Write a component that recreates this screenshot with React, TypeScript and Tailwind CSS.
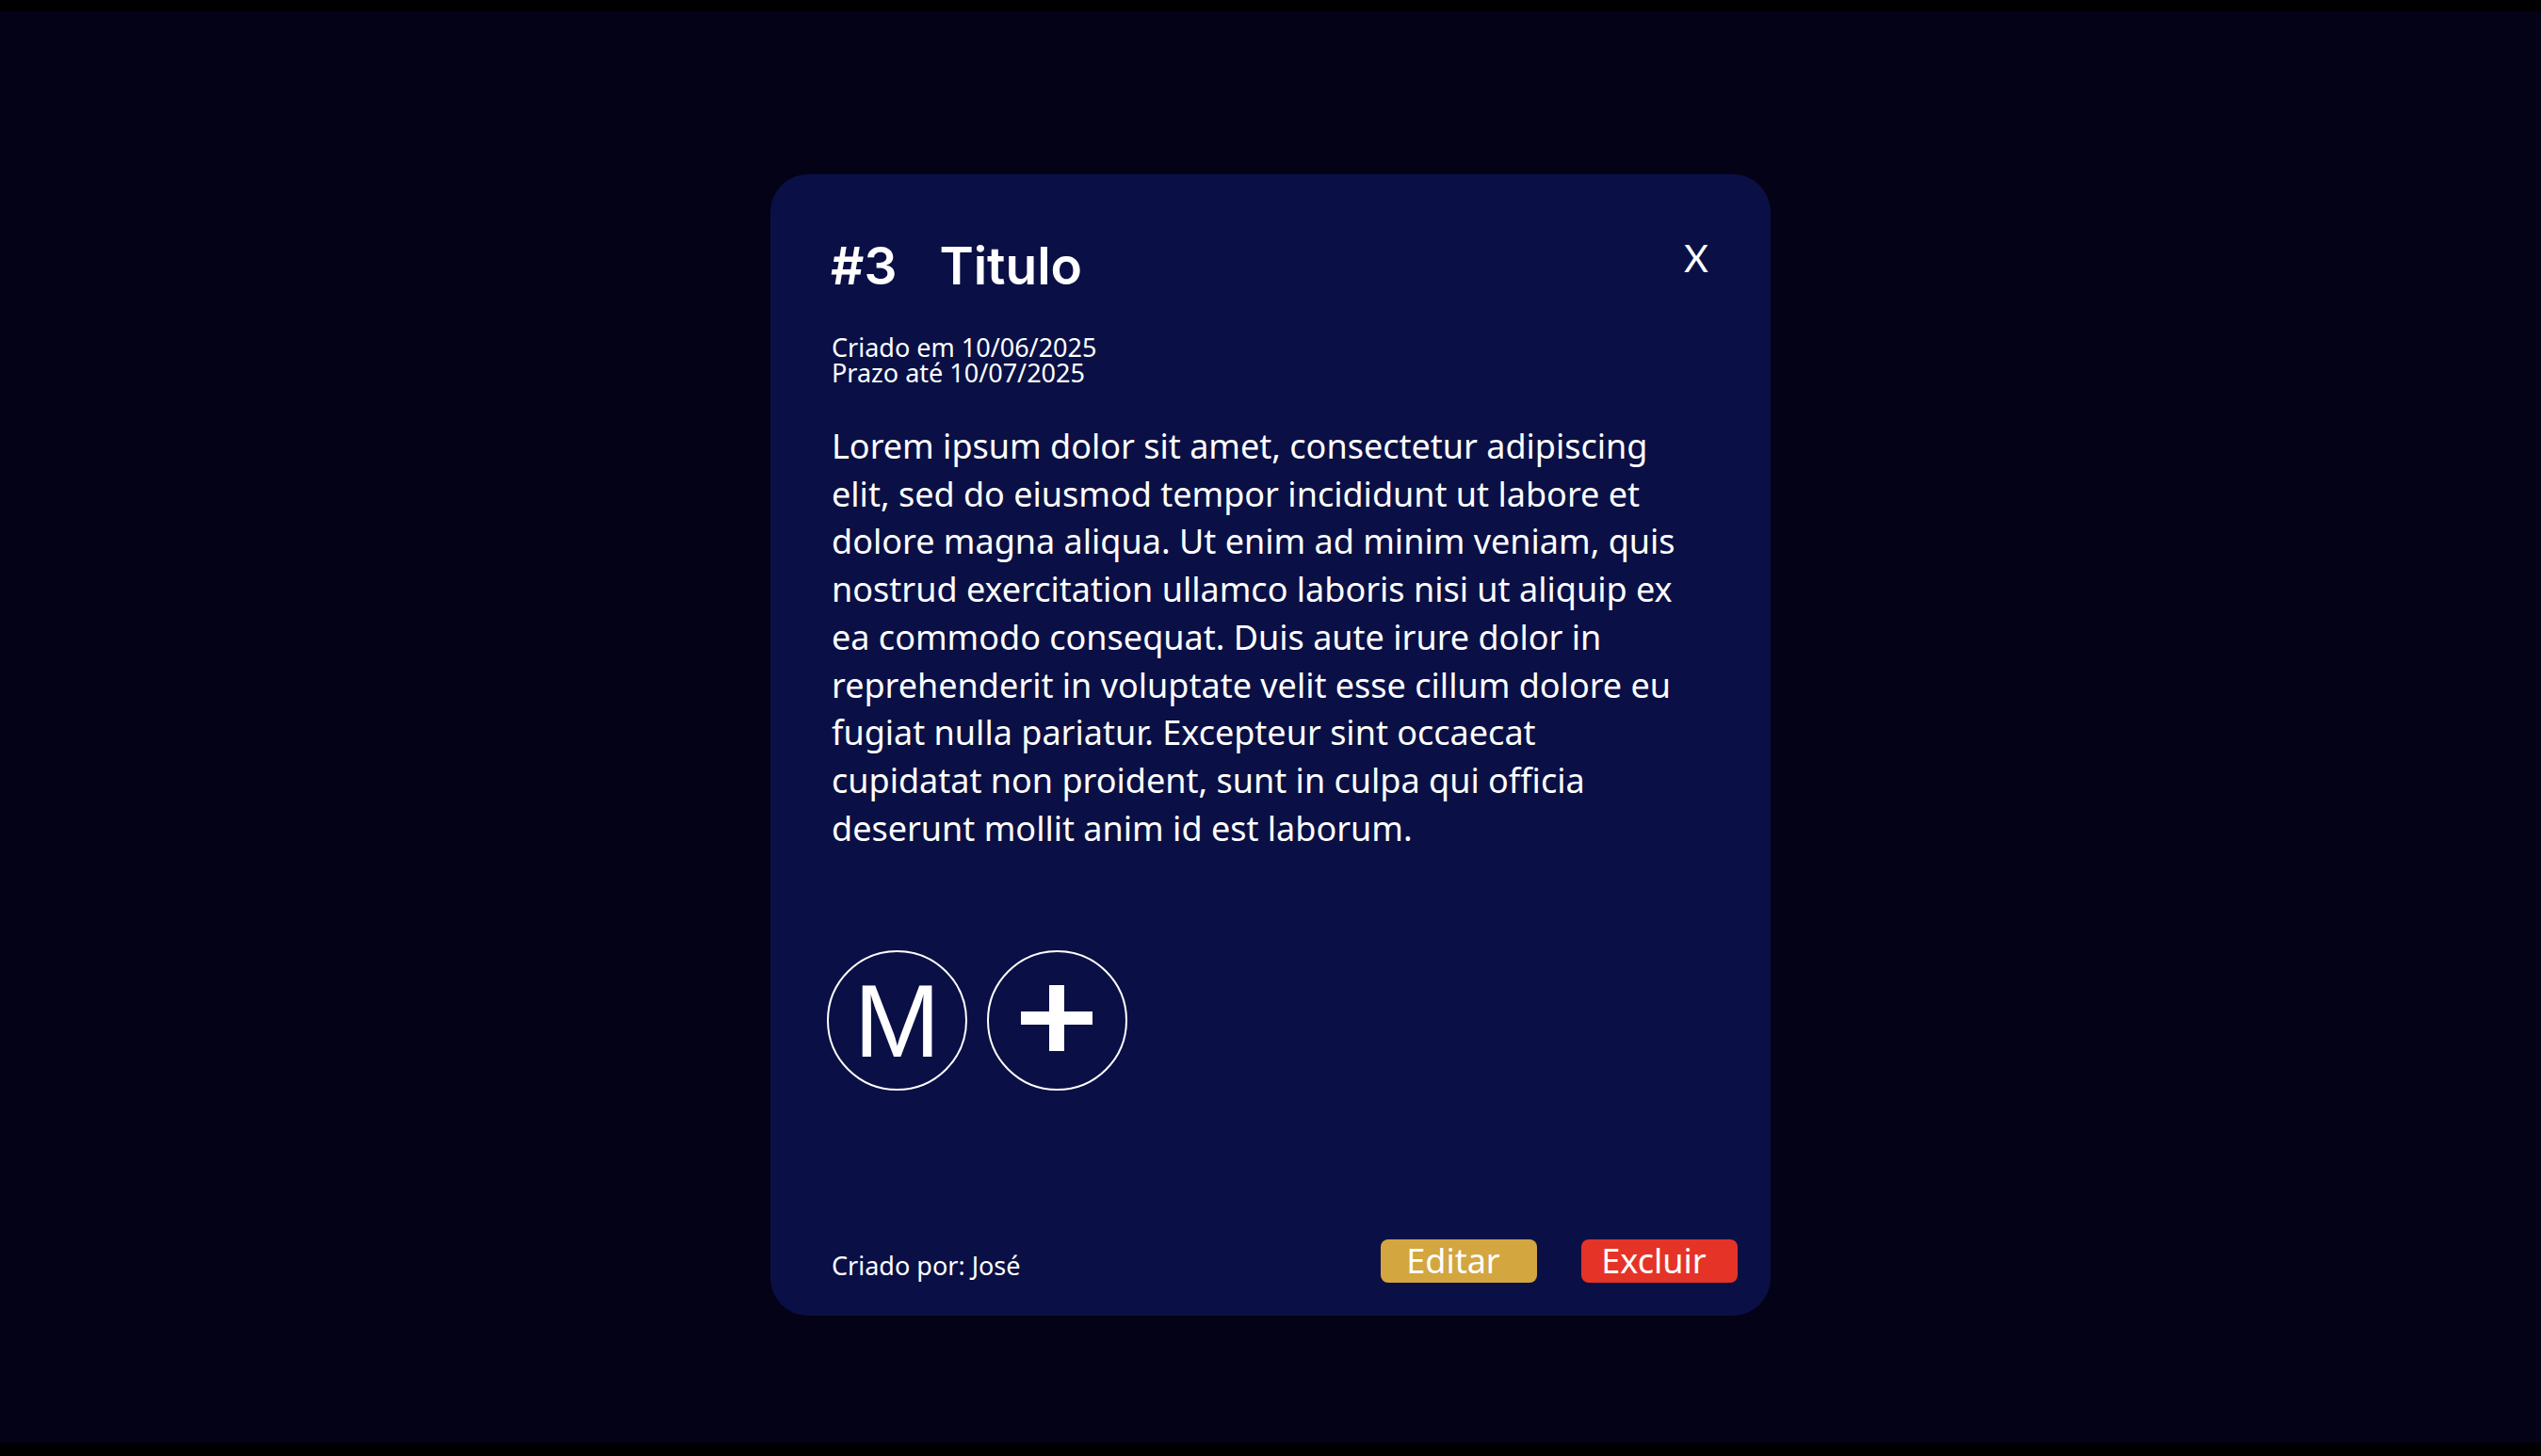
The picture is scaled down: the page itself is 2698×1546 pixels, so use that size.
import React from "react";

const lines = [
  "Lorem ipsum dolor sit amet, consectetur adipiscing",
  "elit, sed do eiusmod tempor incididunt ut labore et",
  "dolore magna aliqua. Ut enim ad minim veniam, quis",
  "nostrud exercitation ullamco laboris nisi ut aliquip ex",
  "ea commodo consequat. Duis aute irure dolor in",
  "reprehenderit in voluptate velit esse cillum dolore eu",
  "fugiat nulla pariatur. Excepteur sint occaecat",
  "cupidatat non proident, sunt in culpa qui officia",
  "deserunt mollit anim id est laborum.",
];

export default function App() {
  return (
    <div className="w-[2698px] h-[1546px] flex flex-col bg-black overflow-hidden font-['Noto_Sans',sans-serif] text-white">
      <div className="h-[12px] bg-black" />
      <div className="flex-1 bg-[#040216] flex justify-center items-start pt-[173px]">
        <div className="w-[1062px] h-[1212px] rounded-[40px] bg-[#0a1045] flex flex-col">
          <div className="pl-[64px] pr-[66px] pt-[70px] flex justify-between items-start">
            <h1 className="flex gap-[45px] text-[55px] leading-none font-semibold font-['Inter',sans-serif]">
              <span>#3</span>
              <span>Titulo</span>
            </h1>
            <button className="text-[40px] leading-none font-normal font-['Lato',sans-serif] -mt-[1px]">X</button>
          </div>
          <div className="pl-[65px] pt-[45px] text-[27px] leading-[27px]">
            <div>Criado em 10/06/2025</div>
            <div>Prazo até 10/07/2025</div>
          </div>
          <div className="pl-[65px] pt-[40px] text-[36px] leading-[50.7px]">
            {lines.map((l) => (
              <span key={l} className="block whitespace-nowrap">
                {l}
              </span>
            ))}
          </div>
          <div className="pl-[60px] pt-[104px] flex gap-[21px]">
            <div className="w-[149px] h-[149px] rounded-full border-2 border-white flex items-center justify-center">
              <span className="text-[110px] leading-none font-['Liberation_Sans',sans-serif]">M</span>
            </div>
            <div className="w-[149px] h-[149px] rounded-full border-2 border-white relative">
              <svg width="149" height="149" viewBox="0 0 149 149" className="absolute -left-[2px] -top-[2px]">
                <rect x="36" y="65" width="76" height="14" fill="white" />
                <rect x="66" y="37" width="16" height="70" fill="white" />
              </svg>
            </div>
          </div>
          <div className="mt-auto pl-[65px] pr-[35px] pb-[35px] flex items-center justify-between">
            <span className="text-[27px] leading-[28px] pt-[10px]">Criado por: José</span>
            <div className="flex gap-[47px]">
              <button className="w-[166px] h-[46px] rounded-[8px] bg-[#d3a63f] text-[36px] leading-none flex items-center justify-center pr-[12px]">
                Editar
              </button>
              <button className="w-[166px] h-[46px] rounded-[8px] bg-[#e53327] text-[36px] leading-none flex items-center justify-center pr-[12px]">
                Excluir
              </button>
            </div>
          </div>
        </div>
      </div>
      <div className="h-[14px] bg-black" />
    </div>
  );
}
